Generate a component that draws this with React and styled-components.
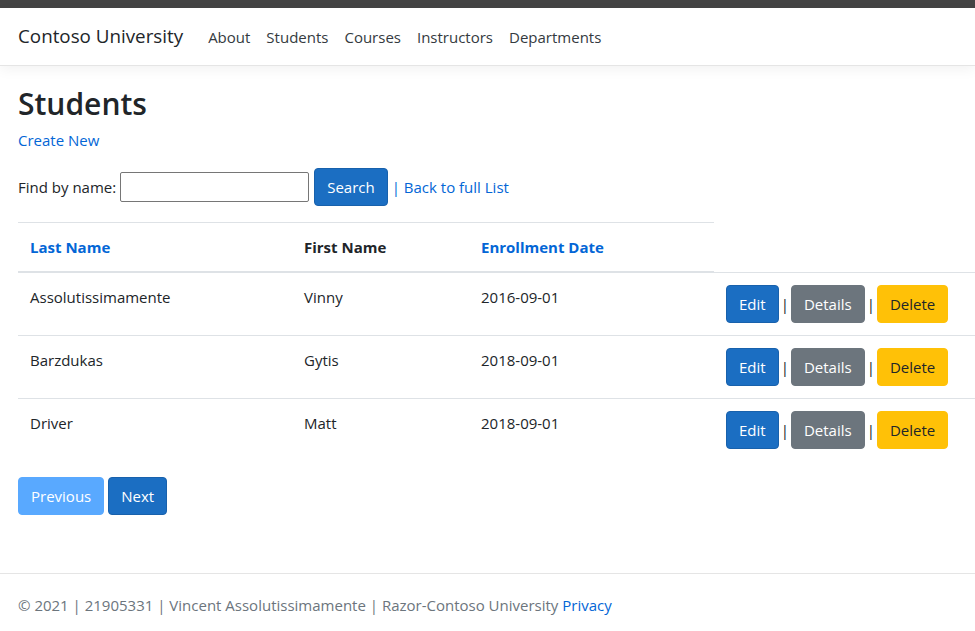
import React from 'react'
import styled, { createGlobalStyle } from 'styled-components'

const GlobalStyle = createGlobalStyle`
    html, body {
        margin: 0;
        padding: 0;
        overflow-x: hidden;
    }
    body {
        font-family: "Open Sans", "Noto Sans", sans-serif;
        font-size: 15px;
        line-height: 24px;
        color: #212529;
        background: #fff;
    }
    * {
        box-sizing: border-box;
    }
`

const TopStrip = styled.div`
    height: 8px;
    background-color: #444444;
`

const Navbar = styled.nav`
    display: flex;
    align-items: center;
    height: 58px;
    padding: 0 18px;
    background: #fff;
    border-bottom: 1px solid #e5e5e5;
    box-shadow: 0 4px 12px rgba(0, 0, 0, 0.05);
`

const Brand = styled.a`
    font-size: 18.8px;
    color: #212529;
    text-decoration: none;
    margin-right: 17px;
    padding-bottom: 1px;
`

const NavLinks = styled.div`
    display: flex;
`

const NavLink = styled.a`
    color: #343a40;
    text-decoration: none;
    padding: 8px;
`

const Main = styled.main`
    padding: 16px 18px 0;
`

const Title = styled.h1`
    font-size: 30px;
    font-weight: 600;
    line-height: 43px;
    margin: 0 0 3px;
`

const Link = styled.a`
    color: #0366d6;
    text-decoration: none;
`

const Para = styled.p`
    margin: 0 0 16px;
`

const SearchForm = styled.form`
    display: flex;
    align-items: center;
    margin-bottom: 16px;
`

const SearchInput = styled.input`
    width: 189px;
    height: 30px;
    margin: 0 5px 0 4px;
    border: 1px solid #767676;
    border-radius: 2px;
    font: inherit;
`

const Button = styled.button`
    display: inline-block;
    font-family: inherit;
    font-size: 15px;
    line-height: 24px;
    padding: 6px 12px;
    border: 1px solid ${p => p.$border};
    border-radius: 4px;
    background-color: ${p => p.$bg};
    color: ${p => p.$fg || '#fff'};
    cursor: pointer;
`

const Sep = styled.span`
    margin: 0 2px;
`

const Table = styled.table`
    width: 990px;
    border-collapse: collapse;
    margin-bottom: 16px;
`

const Th = styled.th`
    text-align: left;
    padding: 12px;
    font-weight: 700;
    border-top: 1px solid #dee2e6;
    border-bottom: 2px solid #dee2e6;
    color: ${p => p.$link ? '#0366d6' : '#212529'};
    width: ${p => p.$w}px;
`

const Td = styled.td`
    padding: 12px;
    vertical-align: top;
    border-top: 1px solid #dee2e6;
    white-space: nowrap;
`

const Pager = styled.div`
    display: flex;
    gap: 4px;
`

const Footer = styled.footer`
    margin-top: 58px;
    border-top: 1px solid #e5e5e5;
    padding: 1px 18px 0;
    line-height: 60px;
    color: #6c757d;
    white-space: nowrap;
`

const students = [
    { last: 'Assolutissimamente', first: 'Vinny', date: '2016-09-01' },
    { last: 'Barzdukas', first: 'Gytis', date: '2018-09-01' },
    { last: 'Driver', first: 'Matt', date: '2018-09-01' },
]

export default function App() {
    return (
        <>
            <GlobalStyle />
            <TopStrip />
            <Navbar>
                <Brand href="#">Contoso University</Brand>
                <NavLinks>
                    <NavLink href="#">About</NavLink>
                    <NavLink href="#">Students</NavLink>
                    <NavLink href="#">Courses</NavLink>
                    <NavLink href="#">Instructors</NavLink>
                    <NavLink href="#">Departments</NavLink>
                </NavLinks>
            </Navbar>
            <Main>
                <Title>Students</Title>
                <Para><Link href="#">Create New</Link></Para>
                <SearchForm onSubmit={e => e.preventDefault()}>
                    Find by name:
                    <SearchInput type="text" />
                    <Button $bg="#1b6ec2" $border="#1861ac">Search</Button>
                    <Link href="#" style={{ marginLeft: 4 }}>| Back to full List</Link>
                </SearchForm>
                <Table>
                    <thead>
                        <tr>
                            <Th $link $w={274}>Last Name</Th>
                            <Th $w={177}>First Name</Th>
                            <Th $link $w={245}>Enrollment Date</Th>
                        </tr>
                    </thead>
                    <tbody>
                        {students.map(s => (
                            <tr key={s.last}>
                                <Td>{s.last}</Td>
                                <Td>{s.first}</Td>
                                <Td>{s.date}</Td>
                                <Td>
                                    <Button $bg="#1b6ec2" $border="#1861ac">Edit</Button>
                                    <Sep>|</Sep>
                                    <Button $bg="#6c757d" $border="#6c757d">Details</Button>
                                    <Sep>|</Sep>
                                    <Button $bg="#ffc107" $border="#ffc107" $fg="#212529">Delete</Button>
                                </Td>
                            </tr>
                        ))}
                    </tbody>
                </Table>
                <Pager>
                    <Button $bg="#59a9ff" $border="#59a9ff">Previous</Button>
                    <Button $bg="#1b6ec2" $border="#1861ac">Next</Button>
                </Pager>
            </Main>
            <Footer>
                © 2021 | 21905331 | Vincent Assolutissimamente | Razor-Contoso University <Link href="#">Privacy</Link>
            </Footer>
        </>
    )
}
